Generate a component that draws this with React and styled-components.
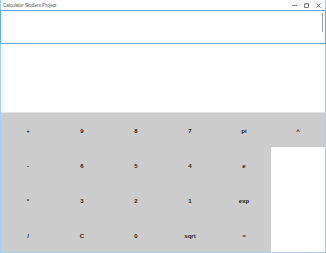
import React from "react";
import styled, { createGlobalStyle } from "styled-components";

const rows = [
    ["+", "9", "8", "7", "pi", "^"],
    ["-", "6", "5", "4", "e", null],
    ["*", "3", "2", "1", "exp", null],
    ["/", "C", "0", "sqrt", "=", null],
];

function App() {
    return (
        <>
            <GlobalStyle />
            <Window>
                <TitleBar>
                    <Title>Calculator Student Project</Title>
                    <Controls>
                        <svg width="5" height="5" viewBox="0 0 5 5">
                            <path d="M0 2.5H5" stroke="#555" strokeWidth="0.7" />
                        </svg>
                        <svg width="5" height="5" viewBox="0 0 5 5">
                            <rect x="0.5" y="1" width="4" height="3.5" fill="none" stroke="#555" strokeWidth="0.7" />
                            <path d="M1.5 0.4H4.6V3" fill="none" stroke="#555" strokeWidth="0.6" />
                        </svg>
                        <svg width="5" height="5" viewBox="0 0 5 5">
                            <path d="M0.5 0.5L4.5 4.5M4.5 0.5L0.5 4.5" stroke="#444" strokeWidth="0.8" />
                        </svg>
                    </Controls>
                </TitleBar>
                <Display>
                    <ScrollThumb />
                </Display>
                <Spacer />
                <Keypad>
                    {rows.flat().map((k, i) =>
                        k ? <Key key={i}>{k}</Key> : <Blank key={i} />
                    )}
                </Keypad>
            </Window>
        </>
    );
}

export default App;

const GlobalStyle = createGlobalStyle`
    html, body {
        margin: 0;
        padding: 0;
        background: #fff;
    }
    * {
        box-sizing: border-box;
    }
`;

const Window = styled.div`
    display: flex;
    flex-direction: column;
    width: 326px;
    height: 253px;
    border: 1px solid #a9cdf0;
    border-top: none;
    background: #fff;
    font-family: "Liberation Sans", Arial, sans-serif;
`;

const TitleBar = styled.div`
    display: flex;
    align-items: center;
    justify-content: space-between;
    height: 10px;
    padding: 0 4px 0 2px;
`;

const Title = styled.span`
    font-size: 4.6px;
    color: #555;
`;

const Controls = styled.div`
    display: flex;
    align-items: center;
    gap: 7px;
`;

const Display = styled.div`
    display: flex;
    justify-content: flex-end;
    align-items: flex-start;
    height: 34px;
    margin: 0 -1px;
    padding: 2px 2px;
    border: 1px solid #6aa6e2;
    box-shadow: inset 0 0 1px #b8d6f3;
`;

const ScrollThumb = styled.div`
    width: 1px;
    height: 19px;
    background: #9a9a9a;
`;

const Spacer = styled.div`
    flex: 1;
`;

const Keypad = styled.div`
    display: grid;
    grid-template-columns: repeat(6, 54px);
    grid-template-rows: 34px repeat(3, 35px);
    border-top: 1px solid #e2e2e2;
`;

const Key = styled.div`
    display: flex;
    align-items: center;
    justify-content: center;
    padding-top: 2px;
    background: #cccccc;
    font-size: 6px;
    font-weight: 700;
    color: #222;
`;

const Blank = styled.div`
    background: #fff;
`;
